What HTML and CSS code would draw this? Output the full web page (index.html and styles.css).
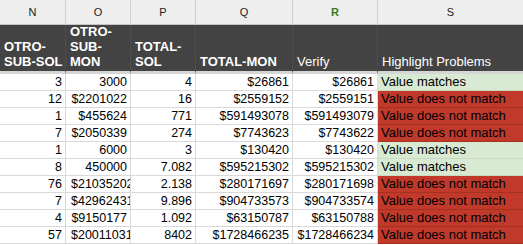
FILE: index.html
```html
<!DOCTYPE html>
<html>
<head>
<meta charset="utf-8">
<link rel="stylesheet" href="styles.css">
</head>
<body>
<div class="sheet">
  <div class="letter">N</div>
  <div class="letter">O</div>
  <div class="letter">P</div>
  <div class="letter">Q</div>
  <div class="letter letter-active">R</div>
  <div class="letter">S</div>

  <div class="head bold">OTRO-<br>SUB-SOL</div>
  <div class="head bold">OTRO-<br>SUB-<br>MON</div>
  <div class="head bold">TOTAL-<br>SOL</div>
  <div class="head bold">TOTAL-MON</div>
  <div class="head">Verify</div>
  <div class="head">Highlight Problems</div>

  <div class="cell num">3</div><div class="cell num">3000</div><div class="cell num">4</div><div class="cell num">$26861</div><div class="cell num">$26861</div><div class="cell ok">Value matches</div>
  <div class="cell num">12</div><div class="cell num">$2201022</div><div class="cell num">16</div><div class="cell num">$2559152</div><div class="cell num">$2559151</div><div class="cell bad">Value does not match</div>
  <div class="cell num">1</div><div class="cell num">$455624</div><div class="cell num">771</div><div class="cell num">$591493078</div><div class="cell num">$591493079</div><div class="cell bad">Value does not match</div>
  <div class="cell num">7</div><div class="cell num">$2050339</div><div class="cell num">274</div><div class="cell num">$7743623</div><div class="cell num">$7743622</div><div class="cell bad">Value does not match</div>
  <div class="cell num">1</div><div class="cell num">6000</div><div class="cell num">3</div><div class="cell num">$130420</div><div class="cell num">$130420</div><div class="cell ok">Value matches</div>
  <div class="cell num">8</div><div class="cell num">450000</div><div class="cell num">7.082</div><div class="cell num">$595215302</div><div class="cell num">$595215302</div><div class="cell ok">Value matches</div>
  <div class="cell num">76</div><div class="cell num clip">$21035202</div><div class="cell num">2.138</div><div class="cell num">$280171697</div><div class="cell num">$280171698</div><div class="cell bad">Value does not match</div>
  <div class="cell num">7</div><div class="cell num clip">$42962431</div><div class="cell num">9.896</div><div class="cell num">$904733573</div><div class="cell num">$904733574</div><div class="cell bad">Value does not match</div>
  <div class="cell num">4</div><div class="cell num">$9150177</div><div class="cell num">1.092</div><div class="cell num">$63150787</div><div class="cell num">$63150788</div><div class="cell bad">Value does not match</div>
  <div class="cell num">57</div><div class="cell num clip">$20011031</div><div class="cell num">8402</div><div class="cell num">$1728466235</div><div class="cell num">$1728466234</div><div class="cell bad">Value does not match</div>
</div>
</body>
</html>
```

FILE: styles.css
```css
html, body {
  margin: 0;
  padding: 0;
  background: #ffffff;
  overflow: hidden;
}

.sheet {
  display: grid;
  grid-template-columns: 66px 65px 65px 97px 85px 146px;
  grid-template-rows: 25px 49px repeat(10, 17px);
  font-family: "Liberation Sans", Arial, sans-serif;
  color: #000;
}

.sheet > div {
  box-sizing: border-box;
  overflow: hidden;
  white-space: nowrap;
}

.letter {
  background: #eeeeee;
  border-right: 1px solid #cfcfcf;
  border-bottom: 1px solid #c4c4c4;
  font-size: 11px;
  color: #222;
  text-align: center;
  line-height: 24px;
}

.letter-active {
  color: #3a7a1e;
  font-weight: bold;
}

.head {
  background: #434343;
  color: #ffffff;
  border-right: 1px solid #4d4d4d;
  border-bottom: 3px solid #d6d6d6;
  font-size: 13px;
  line-height: 15px;
  padding: 0 2px 2px 4px;
  display: flex;
  flex-direction: column;
  justify-content: flex-end;
}

.bold {
  font-weight: bold;
}

.cell {
  border-right: 1px solid #d9d9d9;
  border-bottom: 1px solid #d9d9d9;
  line-height: 16px;
  padding: 0 3px;
}

.num {
  text-align: right;
  font-size: 12.5px;
}

.clip {
  text-align: left;
  padding-left: 5px;
  padding-right: 0;
  text-overflow: clip;
}

.ok {
  background: #d9ead3;
  border-bottom-color: #c9d9c3;
  font-size: 13px;
}

.bad {
  background: #c0392b;
  border-bottom-color: #a8301f;
  font-size: 13px;
}
```
